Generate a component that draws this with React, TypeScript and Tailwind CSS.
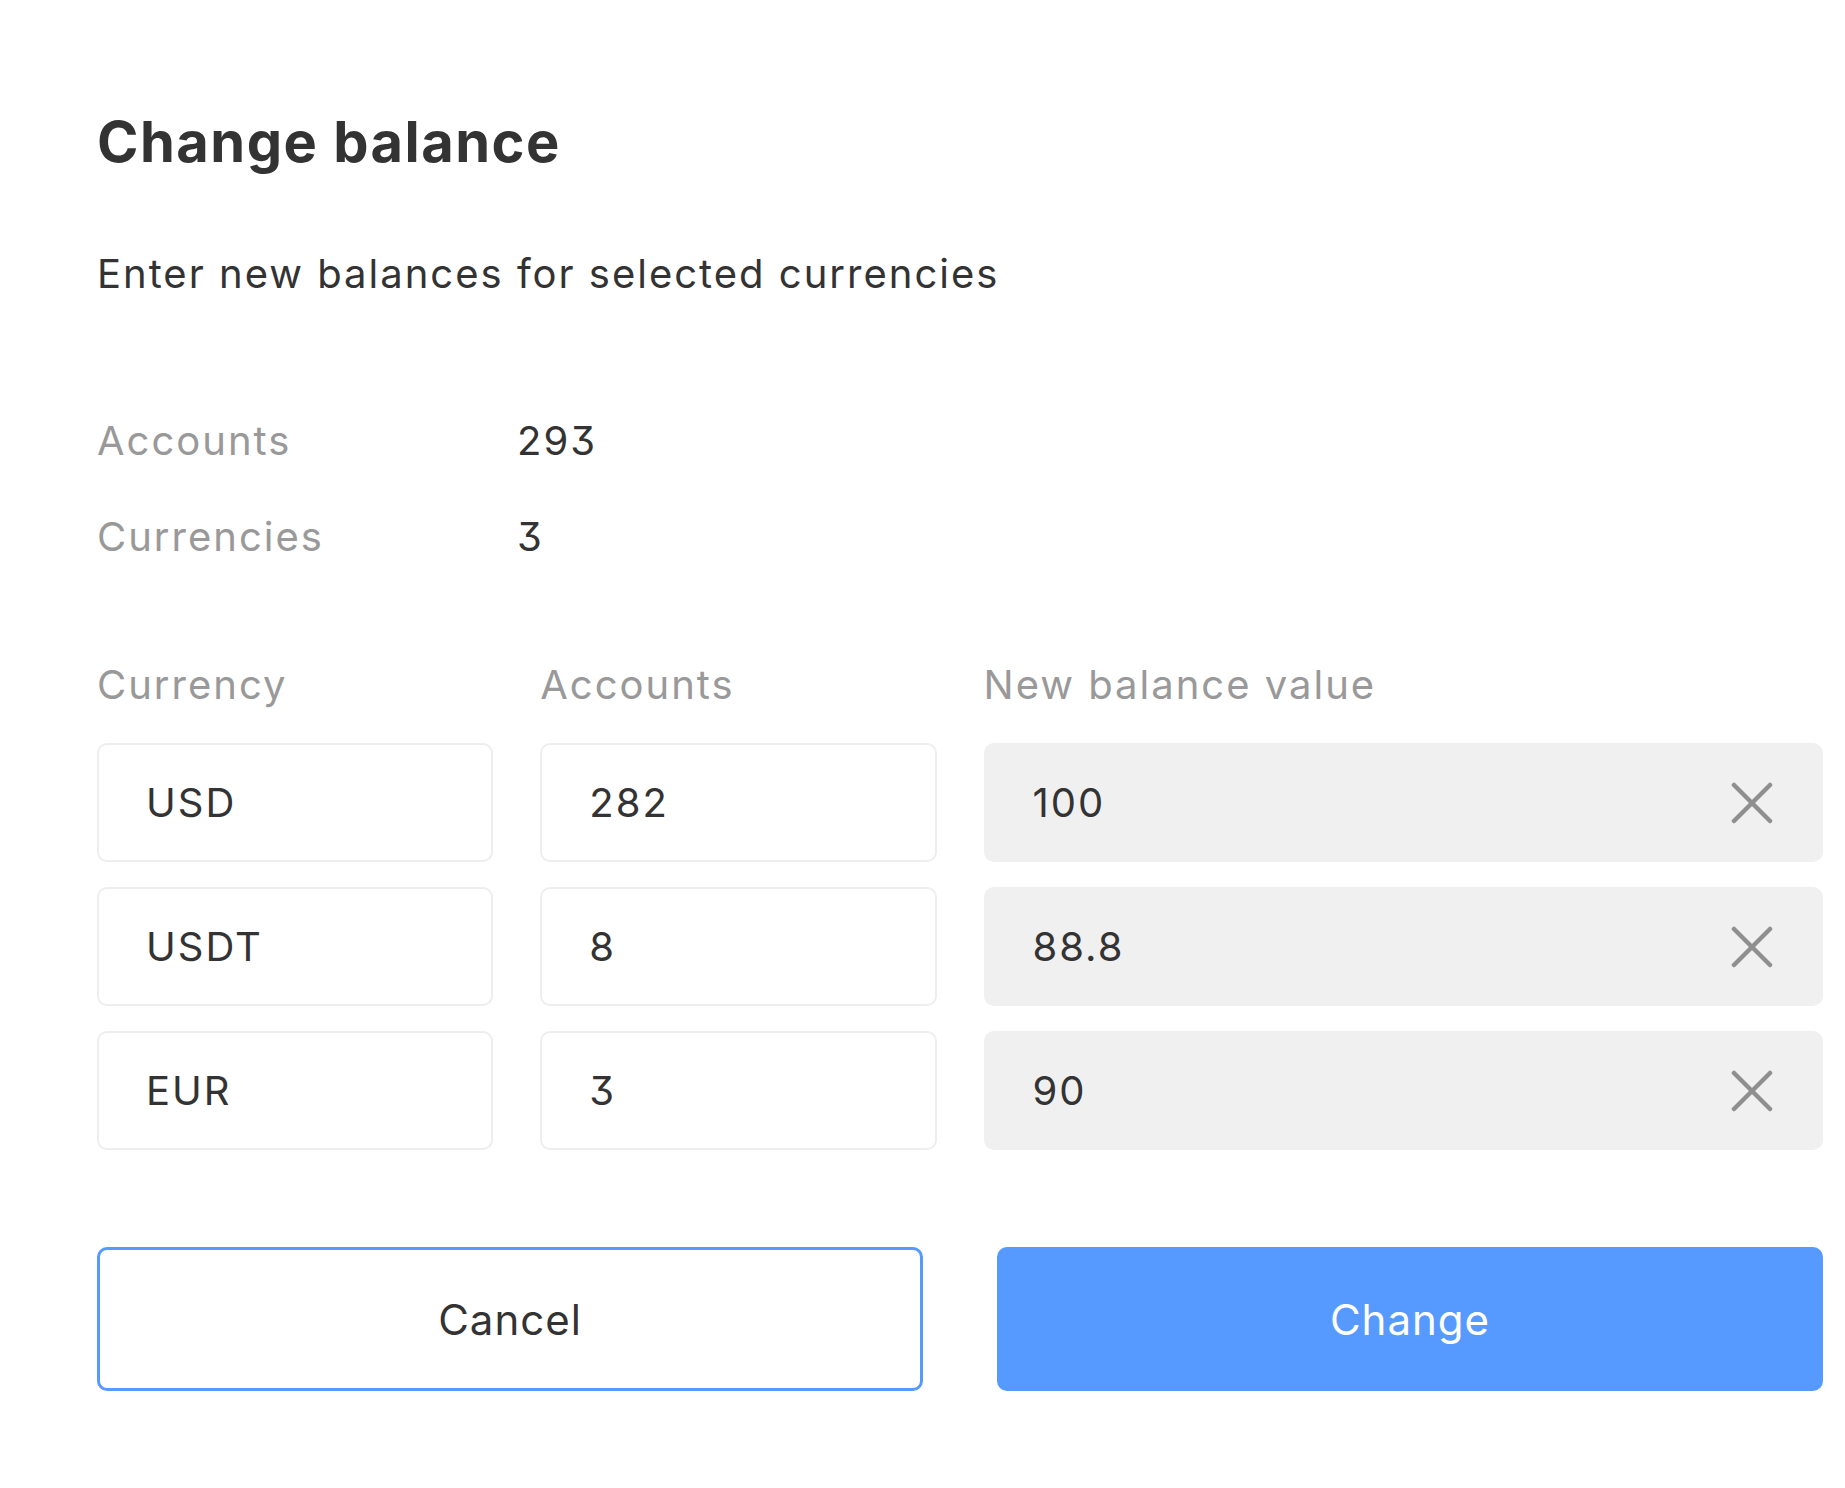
import React, { useState } from "react";

type Row = { currency: string; accounts: number; value: string };

const INITIAL_ROWS: Row[] = [
  { currency: "USD", accounts: 282, value: "100" },
  { currency: "USDT", accounts: 8, value: "88.8" },
  { currency: "EUR", accounts: 3, value: "90" },
];

function ClearIcon() {
  return (
    <svg width="42" height="42" viewBox="0 0 42 42" fill="none" aria-hidden>
      <path d="M3 3L39 39M39 3L3 39" stroke="#8f8f8f" strokeWidth="4.5" strokeLinecap="round" />
    </svg>
  );
}

export default function App() {
  const [rows, setRows] = useState<Row[]>(INITIAL_ROWS);

  const totalAccounts = 293;

  function setValue(i: number, value: string) {
    setRows((prev) => prev.map((r, idx) => (idx === i ? { ...r, value } : r)));
  }

  return (
    <div
      className="min-h-[1488px] w-[1845px] bg-white pl-[97px] pr-[22px] pt-[108px] text-[#333333] tracking-[2px] [font-feature-settings:'cv09'_1] antialiased"
      style={{ fontFamily: "Inter, 'Noto Sans', sans-serif" }}
    >
      <h1 className="text-[56px] font-bold leading-[68px] tracking-[1.5px]">Change balance</h1>

      <p className="mt-[74px] text-[40px] leading-[48px]">Enter new balances for selected currencies</p>

      {/* summary */}
      <div className="mt-[119px] grid grid-cols-[420px_1fr] gap-y-[48px] text-[40px] leading-[48px]">
        <div className="text-[#999999]">Accounts</div>
        <div>{totalAccounts}</div>
        <div className="text-[#999999]">Currencies</div>
        <div>{rows.length}</div>
      </div>

      {/* table header */}
      <div className="mt-[100px] grid grid-cols-4 gap-x-[47px] text-[40px] leading-[48px] text-[#999999]">
        <div>Currency</div>
        <div>Accounts</div>
        <div className="col-span-2">New balance value</div>
      </div>

      <div className="mt-[34px] grid grid-cols-4 gap-x-[47px] gap-y-[25px] text-[40px]">
        {rows.map((r, i) => (
          <React.Fragment key={r.currency}>
            <div className="flex h-[119px] items-center rounded-[10px] border-2 border-[#eeeeee] pl-[47px]">
              {r.currency}
            </div>
            <div className="flex h-[119px] items-center rounded-[10px] border-2 border-[#eeeeee] pl-[47px]">
              {r.accounts}
            </div>
            <div className="col-span-2 flex h-[119px] items-center rounded-[10px] bg-[#f0f0f0] pl-[49px] pr-[50px]">
              <input
                value={r.value}
                onChange={(e) => setValue(i, e.target.value)}
                className="min-w-0 flex-1 bg-transparent text-[40px] tracking-[2px] text-[#333333] outline-none"
              />
              <button type="button" onClick={() => setValue(i, "")} className="flex items-center justify-center">
                <ClearIcon />
              </button>
            </div>
          </React.Fragment>
        ))}
      </div>

      {/* actions */}
      <div className="mt-[97px] grid grid-cols-2 gap-x-[74px]">
        <button
          type="button"
          className="h-[144px] rounded-[10px] border-[3px] border-[#569aff] bg-white text-[42px] tracking-[1px] text-[#333333]"
        >
          Cancel
        </button>
        <button
          type="button"
          className="h-[144px] rounded-[10px] bg-[#569aff] text-[42px] tracking-[1px] text-white"
        >
          Change
        </button>
      </div>
    </div>
  );
}
